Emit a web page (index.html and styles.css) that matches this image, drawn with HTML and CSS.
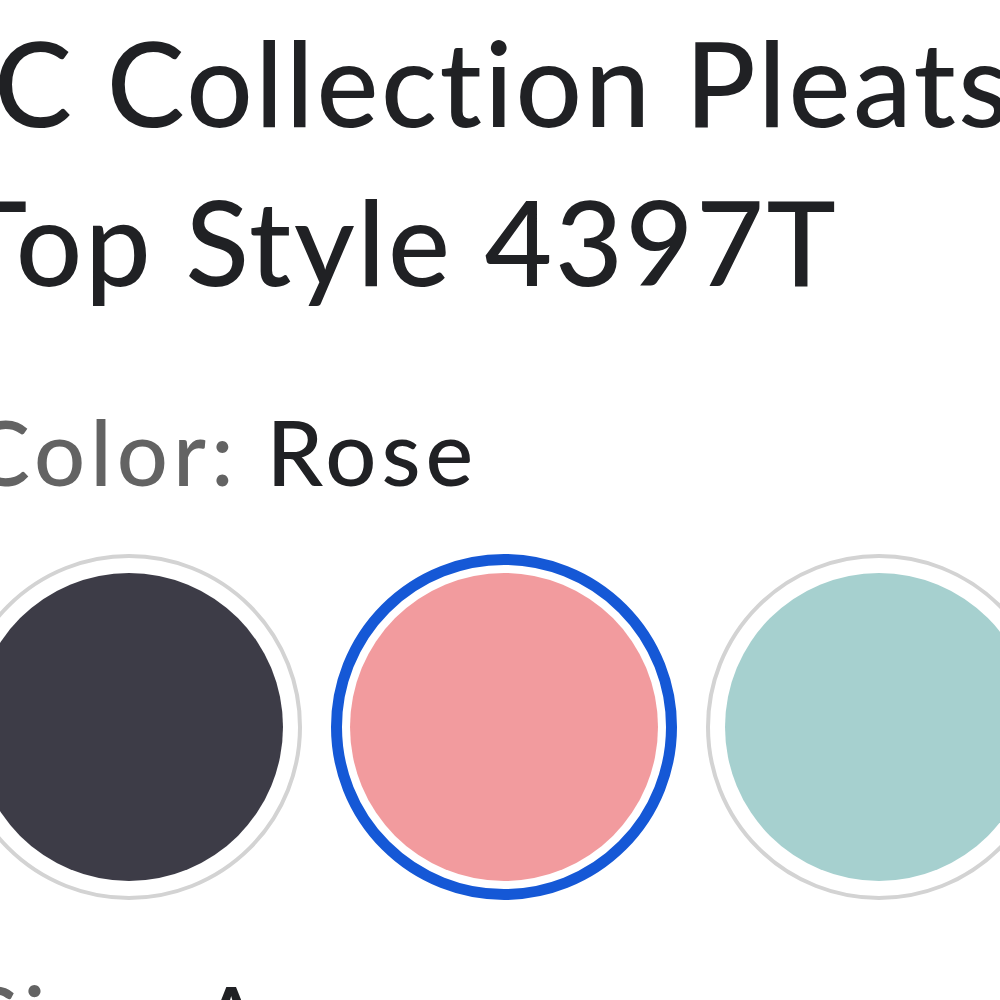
FILE: index.html
```html
<!DOCTYPE html>
<html lang="en">
<head>
<meta charset="utf-8">
<title>C Collection Pleats Top Style 4397T</title>
<link rel="stylesheet" href="styles.css">
</head>
<body>
<main class="product">
  <h1 class="product-title">C Collection Pleats Top Style 4397T</h1>

  <section class="option option-color">
    <p class="option-label"><span class="option-name">Color:</span> <span class="option-value">Rose</span></p>
    <div class="swatches">
      <button class="swatch" aria-label="Navy"><span class="swatch-fill swatch-navy"></span></button>
      <button class="swatch is-selected" aria-label="Rose"><span class="swatch-fill swatch-rose"></span></button>
      <button class="swatch" aria-label="Seafoam"><span class="swatch-fill swatch-seafoam"></span></button>
    </div>
  </section>

  <section class="option option-size">
    <p class="option-label"><span class="option-name">Size:</span> <span class="option-value">Any</span></p>
  </section>
</main>
</body>
</html>
```

FILE: styles.css
```css
html, body {
  margin: 0;
  padding: 0;
  background: #ffffff;
  overflow: hidden;
}

body {
  width: 1000px;
  height: 1000px;
  font-family: Lato, "Open Sans", "Liberation Sans", sans-serif;
  color: #202124;
}

.product {
  display: flex;
  flex-direction: column;
  width: 1110px;
  margin-left: -30px;
  padding-top: 3px;
}

.product-title {
  margin: 0 0 0 -12px;
  font-size: 117px;
  line-height: 159px;
  font-weight: 500;
  letter-spacing: 2.6px;
  text-indent: 36px;
  color: #202124;
}

.option {
  display: flex;
  flex-direction: column;
}

.option-label {
  margin: 0;
  font-size: 90px;
  line-height: 110px;
  font-weight: 500;
  letter-spacing: 5px;
}

.option-color {
  margin-top: 75px;
}

.option-size {
  margin-top: 62px;
}

.option-name {
  color: #636363;
}

.option-value {
  color: #202124;
}

.swatches {
  display: flex;
  gap: 29px;
  margin-top: 48px;
  margin-left: -14px;
}

.swatch {
  box-sizing: border-box;
  flex: none;
  width: 346px;
  height: 346px;
  padding: 14px;
  border: 4px solid #d3d3d3;
  border-radius: 50%;
  background: #ffffff;
  display: flex;
  align-items: center;
  justify-content: center;
  cursor: pointer;
}

.swatch.is-selected {
  border: 11px solid #1558d6;
  padding: 7px;
}

.swatch-fill {
  display: block;
  flex: none;
  width: 308px;
  height: 308px;
  border-radius: 50%;
}

.swatch-navy { background: #3d3c47; }
.swatch-rose { background: #f29b9e; }
.swatch-seafoam { background: #a6d0cf; }
```
